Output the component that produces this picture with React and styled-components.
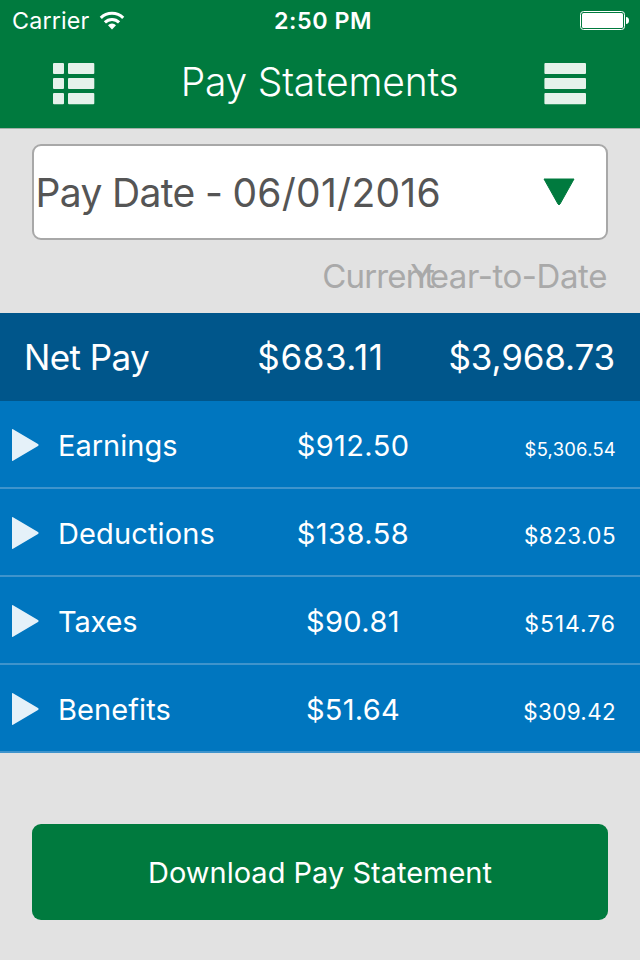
import React from "react";
import styled, { createGlobalStyle } from "styled-components";

const GlobalStyle = createGlobalStyle`
  * { box-sizing: border-box; }
  body {
    margin: 0;
    background: #e2e2e2;
    font-family: Inter, "Liberation Sans", sans-serif;
  }
`;

const Screen = styled.div`
  width: 640px;
  height: 960px;
  display: flex;
  flex-direction: column;
  background: #e2e2e2;
  overflow: hidden;
`;

const Header = styled.header`
  height: 129px;
  background: #007a3e;
  border-bottom: 1px solid #a3b0a8;
  color: #fff;
`;

const StatusBar = styled.div`
  height: 41px;
  display: grid;
  grid-template-columns: 1fr auto 1fr;
  align-items: center;
  padding: 0 11px 0 12px;
  font-size: 23.3px;
  line-height: 41px;
`;

const Carrier = styled.div`
  display: flex;
  align-items: center;
  gap: 10px;
  font-weight: 380;
  letter-spacing: 0.15px;
`;

const Clock = styled.time`
  font-weight: 580;
  letter-spacing: 0.5px;
  margin-left: 5px;
`;

const BatteryIcon = styled.svg`
  justify-self: end;
  display: block;
`;

const Icon = styled.svg`
  display: block;
  flex: none;
`;

const NavBar = styled.div`
  height: 87px;
  display: flex;
  justify-content: space-between;
  padding: 0 54px 0 53px;
`;

const NavButton = styled.button`
  width: 42px;
  height: 42px;
  margin-top: 22px;
  padding: 0;
  border: 0;
  background: none;
`;

const Title = styled.h1`
  margin: 0;
  font-size: 39px;
  line-height: 82px;
  font-weight: 270;
  letter-spacing: -0.22px;
`;

const DateSelect = styled.div`
  height: 96px;
  margin: 15px 32px 0;
  padding: 0 31px 0 1.5px;
  display: flex;
  align-items: center;
  justify-content: space-between;
  background: #fff;
  border: 2px solid #a8a8a8;
  border-radius: 9px;
  color: #555;
  font-size: 39px;
  letter-spacing: -0.65px;
  white-space: nowrap;
`;

const DateValue = styled.time`
  letter-spacing: 0.25px;
`;

const ColumnLabels = styled.div`
  height: 73px;
  padding-right: 33px;
  display: flex;
  justify-content: flex-end;
  font-size: 33px;
  font-weight: 380;
  line-height: 73px;
  color: #a9a9a9;
`;

const ColumnLabel = styled.span`
  letter-spacing: ${(p) => p.$spacing}px;
  margin-right: ${(p) => p.$overlap || 0}px;
`;

const NetPay = styled.div`
  height: 88px;
  padding: 0 25px 0 24px;
  display: grid;
  grid-template-columns: 210px 173px 1fr;
  line-height: 89px;
  font-size: 35px;
  font-weight: 380;
  background: #00568b;
  color: #fff;
`;

const Row = styled.div`
  height: 88px;
  padding: 0 24px 0 12px;
  display: grid;
  grid-template-columns: 46px 215px 160px 1fr;
  align-items: baseline;
  background: #0076bf;
  border-bottom: 2px solid #3f94cc;
  color: #fff;
  font-size: 29px;
  line-height: 89px;
  font-weight: 385;
`;

const Expander = styled.svg`
  display: block;
  align-self: start;
  margin-top: 28px;
`;

const Name = styled.span`
  letter-spacing: ${(p) => p.$spacing || 0}px;
`;

const Amount = styled.span`
  text-align: center;
  letter-spacing: ${(p) => p.$spacing || 0}px;
`;

const YearAmount = styled.span`
  justify-self: end;
  font-size: ${(p) => p.$size || 35}px;
  letter-spacing: ${(p) => p.$spacing || 0}px;
`;

const DownloadButton = styled.button`
  height: 96px;
  margin: 71px 32px 0;
  padding: 2px 0 0;
  border: 0;
  border-radius: 9px;
  background: #007a3e;
  color: #fff;
  font-family: inherit;
  font-size: 29px;
  font-weight: 380;
  line-height: 94px;
`;

const rows = [
  { name: "Earnings", amount: "$912.50", year: "$5,306.54", size: 18.4, nameGap: 0, gap: 0.4, yearGap: 0.25 },
  { name: "Deductions", amount: "$138.58", year: "$823.05", size: 22.4, nameGap: 0.13, gap: 0.5, yearGap: 0.45 },
  { name: "Taxes", amount: "$90.81", year: "$514.76", size: 23, nameGap: -0.2, gap: 0.42, yearGap: 0.9 },
  { name: "Benefits", amount: "$51.64", year: "$309.42", size: 22.4, nameGap: 0.09, gap: 0.3, yearGap: 0.35 },
];

function WifiIcon() {
  return (
    <Icon width="26" height="19" viewBox="0 0 26 19" fill="none" stroke="#fff" strokeWidth="3">
      <path d="M1.800 6.900a15.800 15.800 0 0 1 22.400 0" />
      <path d="M5.900 11.400a10 10 0 0 1 14.200 0" />
      <path d="M13 18.600l-4-4.300a5.500 5.500 0 0 1 8 0z" fill="#fff" stroke="none" />
    </Icon>
  );
}

export default function App() {
  return (
    <Screen>
      <GlobalStyle />
      <Header>
        <StatusBar>
          <Carrier>
            Carrier
            <WifiIcon />
          </Carrier>
          <Clock>2:50 PM</Clock>
          <BatteryIcon width="49" height="19" viewBox="0 0 49 19">
            <rect x="0.5" y="0.5" width="44" height="18" rx="3" fill="none" stroke="#fff" />
            <rect x="2" y="2" width="41" height="15" rx="1.5" fill="#fff" />
            <path d="M46 6c2 0 3 1.4 3 3.5S48 13 46 13z" fill="#fff" />
          </BatteryIcon>
        </StatusBar>
        <NavBar>
          <NavButton aria-label="Statement list">
            <Icon width="42" height="42" viewBox="0 0 42 42" fill="#e5f2eb">
              <rect width="11" height="11" rx="1" />
              <rect x="15" width="26.3" height="11" rx="1" />
              <rect y="15" width="11" height="11" rx="1" />
              <rect x="15" y="15" width="26.3" height="11" rx="1" />
              <rect y="30" width="11" height="11.3" rx="1" />
              <rect x="15" y="30" width="26.3" height="11.3" rx="1" />
            </Icon>
          </NavButton>
          <Title>Pay Statements</Title>
          <NavButton aria-label="Menu">
            <Icon width="42" height="42" viewBox="0 0 42 42" fill="#e5f2eb">
              <rect x="0.4" width="41.6" height="11" rx="1" />
              <rect x="0.4" y="15" width="41.6" height="11" rx="1" />
              <rect x="0.4" y="30" width="41.6" height="11.3" rx="1" />
            </Icon>
          </NavButton>
        </NavBar>
      </Header>

      <DateSelect>
        <span>
          Pay Date - <DateValue>06/01/2016</DateValue>
        </span>
        <Icon width="32" height="28" viewBox="0 0 32 28">
          <path d="M1 1h30L17 26q-1 1.500-2 0z" fill="#007a3e" stroke="#007a3e" strokeLinejoin="round" />
        </Icon>
      </DateSelect>

      <ColumnLabels>
        <ColumnLabel $spacing={-0.85} $overlap={-24}>Current</ColumnLabel>
        <ColumnLabel $spacing={-0.42}>Year-to-Date</ColumnLabel>
      </ColumnLabels>

      <NetPay>
        <Name $spacing={-0.6}>Net Pay</Name>
        <Amount $spacing={0.59}>$683.11</Amount>
        <YearAmount $spacing={-0.15}>$3,968.73</YearAmount>
      </NetPay>
      {rows.map((r) => (
        <Row key={r.name}>
          <Expander width="28" height="32" viewBox="0 0 28 32">
            <path d="M0 .8Q0-.3 1 .3L26 15q1.200 1 0 2L1 31.700Q0 32.300 0 31.200z" fill="#e5f1f9" />
          </Expander>
          <Name $spacing={r.nameGap}>{r.name}</Name>
          <Amount $spacing={r.gap}>{r.amount}</Amount>
          <YearAmount $size={r.size} $spacing={r.yearGap}>{r.year}</YearAmount>
        </Row>
      ))}

      <DownloadButton>Download Pay Statement</DownloadButton>
    </Screen>
  );
}
